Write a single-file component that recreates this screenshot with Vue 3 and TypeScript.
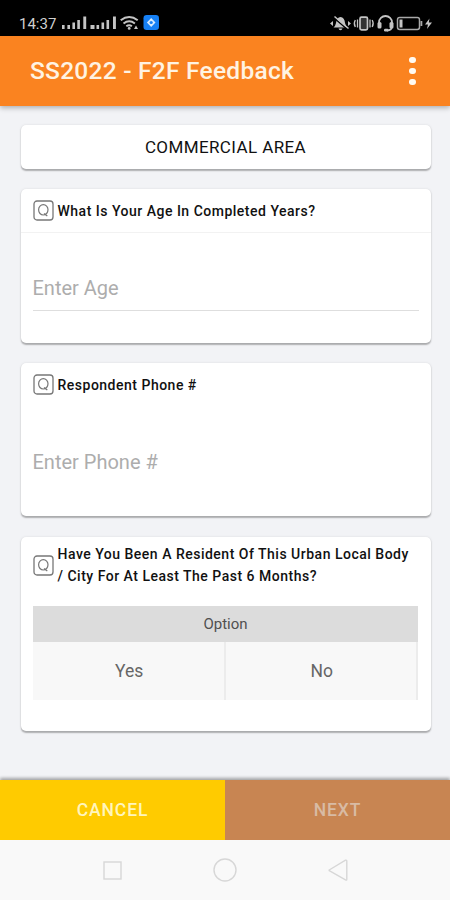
<script setup lang="ts">
import { ref } from 'vue'

interface InputQuestion {
  id: string
  title: string
  placeholder: string
  lined: boolean
}

const area = 'COMMERCIAL AREA'
const questions: InputQuestion[] = [
  { id: 'age', title: 'What Is Your Age In Completed Years?', placeholder: 'Enter Age', lined: true },
  { id: 'phone', title: 'Respondent Phone #', placeholder: 'Enter Phone #', lined: false },
]
const options: string[] = ['Yes', 'No']
const answers = ref<Record<string, string>>({ age: '', phone: '' })
const selected = ref<string | null>(null)
</script>

<template>
  <div class="screen">
    <div class="status">
      <span class="clock">14:37</span>
      <svg class="left-icons" width="100" height="18" viewBox="0 0 100 18" fill="#c4c4c4">
        <path d="M2 11h2.600v4H2zM7.400 11H10v4H7.400zM12.400 8.500H15V15h-2.600zM17.300 6h2.600v9h-2.600zM23.300 2.500h2.900V15h-2.900z" />
        <path d="M30.500 11h4v4h-4zM36.500 11h2.600v4h-2.600zM41.500 8.500h2.600V15h-2.600zM46.500 6h2.600v9h-2.600zM53 2.500h2.900V15H53z" />
        <g fill="none" stroke="#c4c4c4" stroke-width="2">
          <path d="M60.700 6.300q8.500-6.500 17 0M63.500 9.500q5.700-4.400 11.400 0M66.300 12.200q2.900-2 5.600 0" />
        </g>
        <circle cx="69.200" cy="14.400" r="1.400" />
        <path d="M76 11.500l2 3.500h-4z" />
        <rect x="83.500" y="1" width="15.500" height="15" rx="3.200" fill="#1680f5" />
        <path d="M91.200 4l4.300 4.500-4.300 4.500-4.300-4.500z" fill="#d9ecff" />
        <circle cx="91.200" cy="8.500" r="1.600" fill="#1680f5" />
      </svg>
      <svg class="right-icons" width="106" height="20" viewBox="0 0 106 20" fill="#c4c4c4">
        <path d="M4.500 14.500q2-1.500 2.500-4.500Q7.700 4.500 11.500 4q4 .5 4.500 6 .5 3 2.500 4.500zM9.500 15.500h4q-.5 1.800-2 1.800t-2-1.800z" />
        <path d="M4.500 4.500l14 12" stroke="#000" stroke-width="1.500" />
        <path d="M5.500 3.500l14 12" stroke="#c4c4c4" stroke-width="1.500" />
        <path d="M4 8L1 10.500 4 13zM19 8l3 2.500-3 2.500z" />
        <rect x="31" y="4.200" width="7.500" height="12.600" rx="1.500" fill="#333" stroke="#c4c4c4" stroke-width="1.700" />
        <path d="M28.500 6.500v8M41 6.500v8M26.300 7q-2 3.500 0 7M43.200 7q2 3.500 0 7" fill="none" stroke="#c4c4c4" stroke-width="1.300" />
        <path d="M50 12V9.500a6.500 6.500 0 0 1 13 0V13q0 4.500-5 4.500" fill="none" stroke="#c4c4c4" stroke-width="1.800" />
        <rect x="48.500" y="9" width="4" height="6.500" rx="1.500" />
        <rect x="60.500" y="9" width="4" height="6.500" rx="1.500" />
        <rect x="55" y="15.700" width="4.500" height="2.800" rx="1.200" />
        <rect x="68.500" y="4.500" width="22" height="12" rx="2.200" fill="none" stroke="#a8a8a8" stroke-width="1.500" />
        <rect x="70.500" y="6.500" width="3" height="8" />
        <rect x="91.500" y="8" width="1.800" height="5" fill="#a8a8a8" />
        <path d="M100.500 5.500l-4.500 6h3l-1 4.500 5-6.500h-3.200z" />
      </svg>
    </div>

    <header class="bar">
      <h1>SS2022 - F2F Feedback</h1>
      <button class="more" aria-label="More"><i></i><i></i><i></i></button>
    </header>

    <main class="content">
      <section class="card area">{{ area }}</section>

      <section v-for="q in questions" :key="q.id" class="card field" :class="{ lined: q.lined }">
        <div class="question">
          <svg class="q-icon" width="21" height="21" viewBox="0 0 21 21" fill="none" stroke="#777">
            <rect x="1" y="1" width="19" height="19" rx="3" stroke-width="1.300" />
            <ellipse cx="10.300" cy="9.800" rx="4.700" ry="5.200" stroke-width="1.200" />
            <path d="M11 13.500l3.300 2.500" stroke-width="1.200" />
          </svg>
          <span class="label">{{ q.title }}</span>
        </div>
        <input v-model="answers[q.id]" :placeholder="q.placeholder" />
      </section>

      <section class="card choice">
        <div class="question">
          <svg class="q-icon" width="21" height="21" viewBox="0 0 21 21" fill="none" stroke="#777">
            <rect x="1" y="1" width="19" height="19" rx="3" stroke-width="1.300" />
            <ellipse cx="10.300" cy="9.800" rx="4.700" ry="5.200" stroke-width="1.200" />
            <path d="M11 13.500l3.300 2.500" stroke-width="1.200" />
          </svg>
          <span class="label">Have You Been A Resident Of This Urban Local Body<br />/ City For At Least The Past 6 Months?</span>
        </div>
        <div class="table">
          <div class="head">Option</div>
          <div class="options">
            <button v-for="o in options" :key="o" @click="selected = o">{{ o }}</button>
          </div>
        </div>
      </section>
    </main>

    <footer class="actions">
      <button class="cancel">CANCEL</button>
      <button class="next" disabled>NEXT</button>
    </footer>

    <nav class="system">
      <svg width="24" height="24" viewBox="0 0 24 24"><rect x="4" y="4" width="17" height="17" /></svg>
      <svg width="24" height="24" viewBox="0 0 24 24"><circle cx="12" cy="12" r="11" /></svg>
      <svg width="24" height="24" viewBox="0 0 24 24"><path d="M3.200 12L19.500 2.200q1.300-.4 1.300 1v18q0 1.300-1.300.7L3.200 12.500z" /></svg>
    </nav>
  </div>
</template>

<style>
body {
  background: #f2f3f6;
}
</style>

<style scoped>
* {
  box-sizing: border-box;
}
.screen {
  width: 450px;
  height: 900px;
  display: flex;
  flex-direction: column;
  overflow: hidden;
  background: #f2f3f6;
  font-family: Roboto, "Liberation Sans", sans-serif;
  color: #111;
}
button {
  border: 0;
  padding: 0;
  font-family: inherit;
}
.status {
  flex: none;
  height: 36px;
  background: #000;
  display: flex;
  align-items: center;
  padding: 10px 15px 0 19px;
}
.clock {
  width: 41px;
  padding-top: 1px;
  color: #cfcfcf;
  font-size: 15px;
  line-height: 18px;
  white-space: nowrap;
}
.right-icons {
  margin-left: auto;
}
.bar {
  flex: none;
  z-index: 1;
  height: 69.500px;
  background: #fa8320;
  box-shadow: 0 2px 5px rgba(0, 0, 0, 0.28);
  display: flex;
  align-items: center;
  justify-content: space-between;
  padding: 0 32px 0 30px;
}
h1 {
  margin: 0;
  color: #fff3e2;
  font-size: 24.500px;
  font-weight: 500;
  letter-spacing: 0.250px;
  white-space: nowrap;
}
.more {
  width: 11px;
  background: none;
  display: flex;
  flex-direction: column;
  align-items: center;
  gap: 4.500px;
}
.more i {
  width: 6.500px;
  height: 6.500px;
  border-radius: 50%;
  background: #fffaf2;
}
.content {
  flex: 1;
  display: flex;
  flex-direction: column;
  gap: 20px;
  padding: 19.500px 19.500px 0 20.500px;
}
.card {
  flex: none;
  background: #fff;
  border-radius: 5px;
  box-shadow: 0 1.500px 1.500px rgba(0, 0, 0, 0.28), 0 0 3px rgba(0, 0, 0, 0.08);
}
.area {
  height: 44px;
  line-height: 44px;
  text-align: center;
  font-size: 17px;
  letter-spacing: 0.400px;
}
.field {
  height: 153.700px;
  padding-bottom: 32px;
  display: flex;
  flex-direction: column;
}
.question {
  flex: none;
  height: 44px;
  display: flex;
  align-items: center;
  gap: 4px;
  padding: 0 12px;
}
.lined .question {
  border-bottom: 1px solid #f2f2f2;
}
.q-icon {
  flex: none;
}
.label {
  font-size: 14px;
  font-weight: 500;
  letter-spacing: 0.500px;
  line-height: 22px;
  white-space: nowrap;
}
input {
  flex: 1;
  margin: 32px 12px 0;
  padding: 2px 0 0;
  border: 0;
  border-bottom: 1px solid transparent;
  outline: none;
  background: none;
  font-family: inherit;
  font-size: 20px;
}
.lined input {
  border-bottom-color: #dedede;
}
input::placeholder {
  color: #adadad;
  opacity: 1;
}
.choice {
  height: 194px;
  margin-top: 0.600px;
}
.choice .question {
  height: 57px;
}
.table {
  margin: 12.500px 12.500px 0;
}
.head {
  height: 36px;
  background: #dcdcdc;
  line-height: 36px;
  text-align: center;
  font-size: 15px;
  color: #505050;
}
.options {
  display: flex;
}
.options button {
  flex: 1;
  height: 57.500px;
  background: #f8f8f8;
  border-right: 2px solid #ececec;
  padding-left: 2px;
  color: #666;
  font-size: 17.500px;
}
.actions {
  flex: none;
  height: 60px;
  display: flex;
  box-shadow: 0 -2px 3px rgba(0, 0, 0, 0.33);
}
.actions button {
  flex: 1;
  font-size: 17.500px;
  font-weight: 500;
  letter-spacing: 0.900px;
}
.cancel {
  background: #ffcb00;
  color: #fff5bd;
}
.next {
  background: #c88552;
  color: #d8bba4;
}
.system {
  flex: none;
  height: 60px;
  background: #f9f9f9;
  display: flex;
  align-items: center;
  justify-content: center;
  gap: 89px;
}
.system svg {
  fill: none;
  stroke: #d7d7d7;
  stroke-width: 1.400;
}
</style>
